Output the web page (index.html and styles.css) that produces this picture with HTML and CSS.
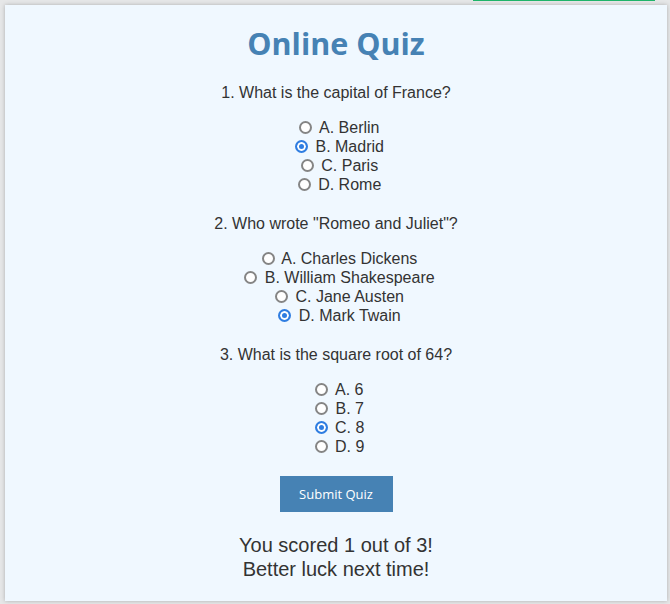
FILE: index.html
```html
<!DOCTYPE html>
<html>
<head>
<meta charset="utf-8">
<link rel="stylesheet" href="styles.css">
</head>
<body>
<div class="topline"></div>
<div class="card">
  <h1 class="title">Online Quiz</h1>

  <div class="question">
    <p class="q-text">1. What is the capital of France?</p>
    <label class="opt"><input type="radio" name="q1"> A. Berlin</label>
    <label class="opt"><input type="radio" name="q1" checked> B. Madrid</label>
    <label class="opt"><input type="radio" name="q1"> C. Paris</label>
    <label class="opt"><input type="radio" name="q1"> D. Rome</label>
  </div>

  <div class="question">
    <p class="q-text">2. Who wrote "Romeo and Juliet"?</p>
    <label class="opt"><input type="radio" name="q2"> A. Charles Dickens</label>
    <label class="opt"><input type="radio" name="q2"> B. William Shakespeare</label>
    <label class="opt"><input type="radio" name="q2"> C. Jane Austen</label>
    <label class="opt"><input type="radio" name="q2" checked> D. Mark Twain</label>
  </div>

  <div class="question">
    <p class="q-text">3. What is the square root of 64?</p>
    <label class="opt"><input type="radio" name="q3"> A. 6</label>
    <label class="opt"><input type="radio" name="q3"> B. 7</label>
    <label class="opt"><input type="radio" name="q3" checked> C. 8</label>
    <label class="opt"><input type="radio" name="q3"> D. 9</label>
  </div>

  <button class="submit">Submit Quiz</button>

  <div class="result">You scored 1 out of 3!<br>Better luck next time!</div>
</div>
</body>
</html>
```

FILE: styles.css
```css
html, body {
  margin: 0;
  padding: 0;
}
body {
  background: #e6e7e8;
  font-family: "Liberation Sans", Arial, sans-serif;
  color: #333;
  width: 670px;
  height: 604px;
  overflow: hidden;
  position: relative;
}
.topline {
  position: absolute;
  top: 0;
  left: 473px;
  width: 182px;
  height: 1px;
  background: #1fb46a;
}
.card {
  margin: 5px 3px 0 5px;
  height: 596px;
  box-sizing: border-box;
  background: #f0f8ff;
  box-shadow: 0 0 4px rgba(0,0,0,0.25);
  padding: 20px;
  text-align: center;
}
.title {
  margin: 0 0 22px;
  font-family: "Open Sans", sans-serif;
  font-weight: 700;
  font-size: 30.5px;
  line-height: 36px;
  color: #4682b4;
}
.question {
  margin-bottom: 20px;
}
.q-text {
  margin: 0 0 16px;
  padding-top: 1px;
  font-size: 16px;
  line-height: 18px;
}
.opt {
  display: block;
  font-size: 16px;
  line-height: 19px;
  height: 19px;
}
.opt input {
  appearance: none;
  -webkit-appearance: none;
  box-sizing: border-box;
  width: 13px;
  height: 13px;
  margin: 0 3px 0 7px;
  border: 2px solid #858585;
  border-radius: 50%;
  background: #fff;
  vertical-align: -1px;
}
.opt input:checked {
  border-color: #2f7de1;
  background: #2f7de1;
  box-shadow: inset 0 0 0 2px #fff;
}
.submit {
  background: #4682b4;
  color: #fff;
  border: none;
  font-family: "Open Sans", sans-serif;
  font-size: 13px;
  height: 36px;
  width: 113px;
  padding: 0;
  cursor: pointer;
}
.result {
  margin-top: 21px;
  font-size: 20px;
  line-height: 24px;
}
```
